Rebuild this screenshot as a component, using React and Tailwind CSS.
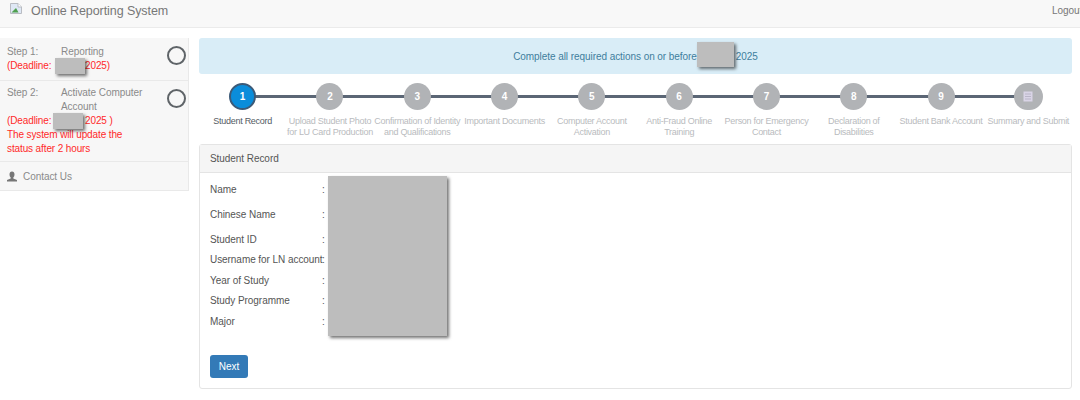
const steps = [
    ['1', 'Student Record'],
    ['2', 'Upload Student Photo for LU Card Production'],
    ['3', 'Confirmation of Identity and Qualifications'],
    ['4', 'Important Documents'],
    ['5', 'Computer Account Activation'],
    ['6', 'Anti-Fraud Online Training'],
    ['7', 'Person for Emergency Contact'],
    ['8', 'Declaration of Disabilities'],
    ['9', 'Student Bank Account'],
    ['', 'Summary and Submit'],
];

const rows = [
    ['Name', ''],
    ['Chinese Name', 'mt-[5px]'],
    ['Student ID', 'mt-[5px]'],
    ['Username for LN account', ''],
    ['Year of Study', 'mt-[1px]'],
    ['Study Programme', ''],
    ['Major', 'mt-[1px]'],
];

function Redact({ className }) {
    return <div className={`absolute bg-[#bdbdbd] shadow-[2px_2px_3px_rgba(0,0,0,0.55)] ${className}`}></div>;
}

// broken image placeholder next to the title
function BrokenImage() {
    return (
        <svg width="12" height="11" viewBox="0 0 12 11" className="shrink-0">
            <path d="M0.5 0.5H8L11.5 4V10.5H0.5Z" fill="#dfe8f5" stroke="#b9bcc2" />
            <path d="M1.5 9.5L6 5L8.5 9.5Z" fill="#4f9f4f" />
            <path d="M8 0.5V4H11.5" fill="#fff" stroke="#b9bcc2" />
        </svg>
    );
}

function Step({ number, label, active }) {
    return (
        <div className="relative flex flex-col items-center">
            <div className={`z-10 flex h-[27px] items-center justify-center rounded-full text-[10px] font-bold text-white ${number ? 'w-[27px]' : 'w-[29px]'} ${active ? 'border-2 border-[#3c5a78] bg-[#0a8ddb]' : 'bg-[#b1b3b6]'}`}>
                {number || (
                    <svg width="10" height="11" viewBox="0 0 10 11">
                        <rect x="0.5" y="0.5" width="9" height="10" fill="#d9d4e6" />
                        <path d="M2 3H8M2 5.5H8M2 8H8" stroke="#b1adc0" strokeWidth="0.8" />
                    </svg>
                )}
            </div>
            <div className={`mt-[6px] w-[90px] text-center text-[9px] leading-[10.5px] tracking-[-0.28px] ${active ? 'text-[#555b63]' : 'text-[#b9bbbe]'}`}>
                {label}
            </div>
        </div>
    );
}

function SideStep({ step, title, date, note, padding, circleTop, redact }) {
    return (
        <div className={`relative border-b border-[#e9e9e9] pl-[7px] text-[10px] leading-[14px] tracking-[-0.06px] ${padding}`}>
            <div className="flex text-[#8a8a8a]">
                <span className="w-[54px] shrink-0">{step}</span>
                <span className="w-[90px]">{title}</span>
            </div>
            <div className="tracking-[-0.12px] text-[#ff2a2a]">(Deadline: <span className="inline-block w-[31px]"></span>{date}</div>
            {note && <div className="w-[125px] tracking-[-0.12px] text-[#ff2a2a]">{note}</div>}
            <div className={`absolute right-[2px] h-[19px] w-[19px] rounded-full border-2 border-[#5f6468] ${circleTop}`}></div>
            <Redact className={`h-[16px] w-[30px] ${redact}`} />
        </div>
    );
}

export default function App() {
    return (
        <div className="relative h-[400px] w-[1080px] overflow-hidden bg-white font-['Liberation_Sans',Arial,sans-serif]">
            <header className="flex h-[28px] items-start justify-between border-b border-[#ebebeb] bg-[#f8f8f8]">
                <div className="flex items-start pt-[3px] pl-[10px]">
                    <BrokenImage />
                    <span className="mt-[1px] ml-[9px] text-[12.5px] leading-[14px] tracking-[-0.08px] text-[#777]">Online Reporting System</span>
                </div>
                <span className="mt-[4px] w-[28px] overflow-hidden text-[10px] leading-[13px] tracking-[-0.06px] whitespace-nowrap text-[#777]">Logout</span>
            </header>

            <div className="mt-[10px] flex items-start">
                <aside className="w-[189px] shrink-0 border-r border-b border-[#e9e9e9] bg-[#f7f7f7]">
                    <SideStep
                        step="Step 1:"
                        title="Reporting"
                        date="2025)"
                        padding="pt-[7px] pb-[7px]"
                        circleTop="top-[8px]"
                        redact="top-[20px] left-[55px]"
                    />
                    <SideStep
                        step="Step 2:"
                        title="Activate Computer Account"
                        date="2025 )"
                        note="The system will update the status after 2 hours"
                        padding="pt-[5px] pb-[5px]"
                        circleTop="top-[8px]"
                        redact="top-[32px] left-[53px]"
                    />
                    <div className="flex h-[28px] items-center pt-[1px] pl-[7px] text-[10px] tracking-[-0.06px] text-[#8a8a8a]">
                        <svg width="10" height="11" viewBox="0 0 10 11" className="mr-[6px]">
                            <path d="M5 0.5C6.6 0.5 7.5 1.8 7.5 3.4C7.5 4.8 6.8 6 6.3 6.5V7.4L10 9V10.5H0V9L3.7 7.4V6.5C3.2 6 2.5 4.8 2.5 3.4C2.5 1.8 3.4 0.5 5 0.5Z" fill="#777" />
                        </svg>
                        Contact Us
                    </div>
                </aside>

                <main className="ml-[10px] w-[873px] shrink-0">
                    <div className="relative flex h-[36px] items-center justify-center rounded-[3px] bg-[#d9edf7] text-[10px] tracking-[-0.06px] text-[#3f7e9d]">
                        <span>Complete all required actions on or before</span>
                        <span className="w-[39px]"></span>
                        <span>2025</span>
                        <Redact className="top-[4px] left-[498px] h-[25px] w-[37px]" />
                    </div>

                    <div className="relative mt-[9px] grid h-[61px] grid-cols-10">
                        <div className="absolute top-[12px] right-[44px] left-[44px] h-[3px] bg-[#5b6675]"></div>
                        {steps.map(([number, label], i) => (
                            <Step key={label} number={number} label={label} active={i === 0} />
                        ))}
                    </div>

                    <section className="relative h-[245px] rounded-[3px] border border-[#e4e4e4]">
                        <div className="flex h-[28px] items-center border-b border-[#e4e4e4] bg-[#f5f5f5] pl-[10px] text-[10px] tracking-[-0.06px] text-[#555]">
                            Student Record
                        </div>
                        <div className="px-[10px] pt-[6px] text-[10px] tracking-[-0.06px] text-[#555]">
                            {rows.map(([label, margin]) => (
                                <div key={label} className={`flex h-[20px] items-center ${margin}`}>
                                    <span className="w-[112px] whitespace-nowrap">{label}</span>
                                    <span>:</span>
                                </div>
                            ))}
                            <button type="button" className="mt-[24px] h-[23px] w-[38px] rounded-[3px] bg-[#337ab7] text-[10px] text-white">
                                Next
                            </button>
                        </div>
                        <Redact className="top-[31px] left-[128px] h-[160px] w-[119px]" />
                    </section>
                </main>
            </div>
        </div>
    );
}
